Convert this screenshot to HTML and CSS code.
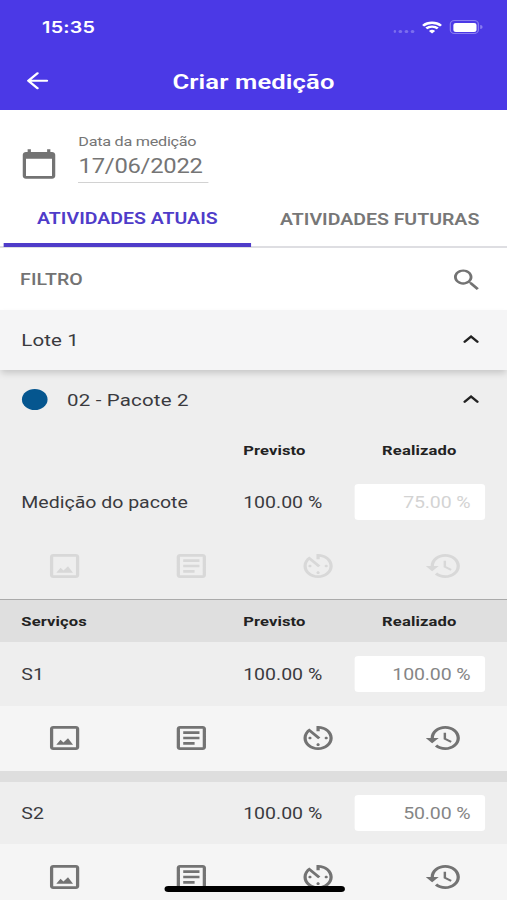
FILE: index.html
```html
<!DOCTYPE html>
<html lang="pt-BR">
<head>
<meta charset="utf-8">
<title>Criar medição</title>
<link rel="stylesheet" href="styles.css">
</head>
<body>
<svg class="sprite" aria-hidden="true">
  <symbol id="image" viewBox="0 0 24 24"><path d="M19 5v14H5V5h14m0-2H5c-1.1 0-2 .9-2 2v14c0 1.1.9 2 2 2h14c1.1 0 2-.9 2-2V5c0-1.1-.9-2-2-2zM6.9 17l2.6-3.6 1.8 1.9 2.8-3.2 3.1 4.9z"/></symbol>
  <symbol id="article" viewBox="0 0 24 24"><path d="M19 5v14H5V5h14m0-2H5c-1.1 0-2 .9-2 2v14c0 1.1.9 2 2 2h14c1.1 0 2-.9 2-2V5c0-1.1-.9-2-2-2zM14 17H7v-2h7v2zm3-4H7v-2h10v2zm0-4H7V7h10v2z"/></symbol>
  <symbol id="timer" viewBox="0 0 24 24"><path d="M11 17c0 .55.45 1 1 1s1-.45 1-1-.45-1-1-1-1 .45-1 1zm0-14v4h2V5.08c3.39.49 6 3.39 6 6.92 0 3.87-3.13 7-7 7s-7-3.13-7-7c0-1.68.59-3.22 1.58-4.42L12 13l1.41-1.41-6.8-6.8v.02C4.42 6.45 3 9.05 3 12c0 4.97 4.02 9 9 9 4.97 0 9-4.03 9-9s-4.03-9-9-9h-1zm7 9c0-.55-.45-1-1-1s-1 .45-1 1 .45 1 1 1 1-.45 1-1zM6 12c0 .55.45 1 1 1s1-.45 1-1-.45-1-1-1-1 .45-1 1z"/></symbol>
  <symbol id="history" viewBox="0 0 24 24"><path d="M13 3c-4.97 0-9 4.03-9 9H1l3.89 3.89.07.14L9 12H6c0-3.87 3.13-7 7-7s7 3.13 7 7-3.13 7-7 7c-1.93 0-3.68-.79-4.94-2.06l-1.42 1.42C8.27 19.99 10.51 21 13 21c4.97 0 9-4.03 9-9s-4.03-9-9-9zm-1 5v5l4.28 2.54.72-1.21-3.5-2.08V8H12z"/></symbol>
  <symbol id="up" viewBox="0 0 24 24"><path d="M7 14.200l5-5 5 5" fill="none" stroke="currentColor" stroke-width="2.1" stroke-linecap="round"/></symbol>
</svg>
<div class="screen">
  <header class="top">
    <div class="status">
      <span class="time">15:35</span>
      <span class="dots"><i></i><i></i><i></i><i></i></span>
      <svg class="wifi" viewBox="0 0 18 13"><path d="M1.2 4.6a11.3 11.3 0 0 1 15.6 0M4 7.5a7.3 7.3 0 0 1 10 0" fill="none" stroke="#fff" stroke-width="2.4"/><path d="M9 12.8L6.3 10.2a4 4 0 0 1 5.4 0z" fill="#fff"/></svg>
      <span class="battery"><i></i></span><span class="nub"></span>
    </div>
    <div class="bar">
      <svg class="back" viewBox="0 0 18 18"><path d="M17 9H1.500M9 1.300L1.300 9 9 16.700" fill="none" stroke="#fff" stroke-width="2.1" stroke-linecap="round" stroke-linejoin="round"/></svg>
      <h1>Criar medição</h1>
    </div>
  </header>

  <section class="date">
    <svg class="calendar" viewBox="0 0 24 24"><path d="M20 3h-1V1h-2v2H7V1H5v2H4c-1.100 0-2 .9-2 2v16c0 1.100.9 2 2 2h16c1.100 0 2-.9 2-2V5c0-1.100-.9-2-2-2zm0 18H4V8h16v13z"/></svg>
    <div class="field"><span class="label">Data da medição</span><span class="value">17/06/2022</span></div>
  </section>

  <nav class="tabs"><span class="tab active">ATIVIDADES ATUAIS</span><span class="tab">ATIVIDADES FUTURAS</span></nav>

  <div class="filter"><span>FILTRO</span>
    <svg class="search" viewBox="0 0 24 24"><path d="M15.500 14h-.79l-.28-.27C15.410 12.590 16 11.110 16 9.500 16 5.910 13.090 3 9.500 3S3 5.910 3 9.500 5.910 16 9.500 16c1.610 0 3.090-.59 4.230-1.570l.27.28v.79l5 4.990L20.490 19l-4.990-5zm-6 0C7.010 14 5 11.990 5 9.500S7.010 5 9.500 5 14 7.010 14 9.500 11.990 14 9.500 14z"/></svg>
  </div>

  <div class="lot"><span>Lote 1</span><svg class="chev"><use href="#up"/></svg></div>

  <section class="package">
    <div class="pack-head"><i class="dot"></i><span>02 - Pacote 2</span><svg class="chev"><use href="#up"/></svg></div>
    <div class="grid heads"><span></span><span>Previsto</span><span class="real">Realizado</span></div>
    <div class="grid row"><span>Medição do pacote</span><span>100.00 %</span><span class="input off">75.00 %</span></div>
    <div class="icons off"><svg><use href="#image"/></svg><svg><use href="#article"/></svg><svg><use href="#timer"/></svg><svg><use href="#history"/></svg></div>
  </section>

  <div class="grid heads services"><span>Serviços</span><span>Previsto</span><span class="real">Realizado</span></div>

  <section class="service">
    <div class="grid row"><span>S1</span><span>100.00 %</span><span class="input">100.00 %</span></div>
    <div class="icons"><svg><use href="#image"/></svg><svg><use href="#article"/></svg><svg><use href="#timer"/></svg><svg><use href="#history"/></svg></div>
  </section>
  <section class="service">
    <div class="grid row"><span>S2</span><span>100.00 %</span><span class="input">50.00 %</span></div>
    <div class="icons"><svg><use href="#image"/></svg><svg><use href="#article"/></svg><svg><use href="#timer"/></svg><svg><use href="#history"/></svg></div>
  </section>
  <div class="home"></div>
</div>
</body>
</html>
```
FILE: styles.css
```css
* { box-sizing: border-box; }
html, body { margin: 0; height: 900px; overflow: hidden; background: #fff; }
.sprite { display: none; }

.screen {
  position: relative;
  width: 416px;
  height: 900px;
  overflow: hidden;
  transform: scaleX(1.21875);
  transform-origin: 0 0;
  font-family: Roboto, "Liberation Sans", sans-serif;
  font-size: 16px;
  letter-spacing: 0;
  color: #3a3a3e;
  background: #fff;
}
svg { display: block; flex: none; fill: currentColor; }

.top { height: 110px; background: #4b39e6; color: #fff; }
.status { display: flex; height: 54px; padding: 0 20px 0 34.5px; align-items: center; }
.time { flex: 1; font: 600 16.2px Inter, sans-serif; letter-spacing: 0.2px; }
.dots { display: flex; gap: 2.2px; margin: 8px 6.5px 0 0; }
.dots i { width: 2.6px; height: 3px; border-radius: 50%; background: #7b6eee; }
.wifi { width: 17px; height: 13px; margin-right: 6px; }
.battery { width: 24px; height: 14px; padding: 1.500px; border: 1px solid #8a7ef0; border-radius: 4px; }
.battery i { display: block; height: 9px; border-radius: 2px; background: #fff; }
.nub { width: 2px; height: 4px; margin-left: 1px; border-radius: 0 2px 2px 0; background: #8a7ef0; }
.bar { display: grid; grid-template-columns: 58px 1fr 58px; height: 54px; align-items: center; }
.back { width: 17.5px; height: 17.5px; margin-left: 22px; }
h1 { margin: 1px 0 0; font-size: 21px; font-weight: 600; letter-spacing: 0.1px; text-align: center; }

.date { display: flex; height: 81px; padding: 22px 16px 0; }
.calendar { width: 32px; height: 32px; margin: 15.500px 0 0 0; color: #737373; }
.field { display: flex; flex-direction: column; width: 107px; height: 51px; margin-left: 16px; border-bottom: 1px solid #d2d2d2; color: #757575; }
.label { padding-left: 0.300px; font-size: 13.3px; line-height: 19px; letter-spacing: -0.22px; white-space: nowrap; }
.value { padding-left: 0.500px; font-size: 19.5px; line-height: 32px; letter-spacing: -0.2px; }

.tabs { display: grid; grid-template-columns: 203px 1fr; height: 57px; padding-left: 3px; border-bottom: 2px solid #dedee2; }
.tab { padding: 18px 0 0 1px; line-height: 22px; text-align: center; font-weight: 600; letter-spacing: 0; color: #777; }
.tab.active { height: 56px; padding: 17px 0 0; line-height: 21px; border-bottom: 4px solid #4f3cc9; color: #4f3cc9; }

.filter { display: flex; height: 62px; padding: 1px 19.500px 0 16.500px; align-items: center; justify-content: space-between; font-weight: 500; letter-spacing: 0.1px; color: #737373; }
.search { width: 28px; height: 28px; }

.lot { display: flex; position: relative; height: 60px; padding: 0 17px 1px 17.500px; align-items: center; justify-content: space-between; font-size: 16.8px; letter-spacing: 0.1px; background: #f5f5f6; box-shadow: 0 4px 6px -1px #0000002b; }
.chev { width: 25px; height: 25px; color: #222; }
.package { height: 229px; background: #eee; }
.pack-head { display: flex; height: 59px; padding: 0 17px 0 17.500px; align-items: center; font-size: 16.8px; letter-spacing: 0.16px; }
.pack-head .dot { width: 21.500px; height: 21.500px; margin-right: 16px; border-radius: 50%; background: #05568f; }
.pack-head .chev { margin-left: auto; }

.grid { display: grid; grid-template-columns: 182px 91px 107px; padding-left: 17.500px; align-items: center; }
.heads { height: 42px; font-size: 13.6px; font-weight: 700; color: #222; letter-spacing: 0.1px; }
.real { text-align: center; }
.package .row { height: 62px; }
.package .row > span:not(.input) { padding-top: 1px; }
.input { height: 36px; padding-right: 11.500px; border-radius: 3px; background: #fff; color: #858585; line-height: 37px; letter-spacing: -0.1px; text-align: right; }
.input.off { color: #d3d3d3; }
.icons { display: grid; grid-template-columns: repeat(4, 1fr); height: 65px; padding: 0 0 1px 1px; align-items: center; justify-items: center; background: #f5f5f5; color: #737373; }
.icons svg { position: relative; left: 0.300px; width: 32px; height: 32px; }
.icons.off { padding-top: 2px; background: transparent; color: #d8d8d8; }

.services { height: 43px; border-top: 1px solid #aaa; background: #dfdfdf; }
.service { border-bottom: 11px solid #dedede; background: #eee; }
.service .row { height: 64px; }
.service + .service .row { height: 62px; }
.service + .service .icons { height: 66px; padding-bottom: 0; }
.home { position: absolute; left: 134.500px; bottom: 8px; width: 148px; height: 6px; border-radius: 3px; background: #000; }
```
